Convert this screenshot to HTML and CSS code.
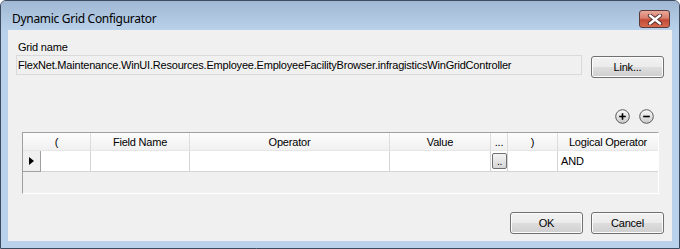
FILE: index.html
```html
<!DOCTYPE html>
<html>
<head>
<meta charset="utf-8">
<link rel="stylesheet" href="styles.css">
</head>
<body>
<div class="window">
  <div class="titlebar">
    <span class="title">Dynamic Grid Configurator</span>
    <div class="close">
      <svg width="16" height="11" viewBox="0 0 16 11">
        <path d="M3 1.5 L13 9.5 M13 1.5 L3 9.5" stroke="#4a2a2a" stroke-width="4.2" stroke-linecap="round"/>
        <path d="M3 1.5 L13 9.5 M13 1.5 L3 9.5" stroke="#ffffff" stroke-width="2.4" stroke-linecap="round"/>
      </svg>
    </div>
  </div>
  <div class="client">
    <div class="label">Grid name</div>
    <div class="name-row">
      <div class="textbox">FlexNet.Maintenance.WinUI.Resources.Employee.EmployeeFacilityBrowser.infragisticsWinGridController</div>
      <div class="btn link-btn">Link...</div>
    </div>
    <div class="icon-row">
      <svg class="round-icon" width="15" height="15" viewBox="0 0 15 15">
        <defs><linearGradient id="g1" x1="0" y1="0" x2="0" y2="1"><stop offset="0" stop-color="#fbfbfb"/><stop offset="1" stop-color="#c9c9c9"/></linearGradient></defs>
        <circle cx="7.5" cy="7.5" r="6.8" fill="url(#g1)" stroke="#5a5a5a" stroke-width="1"/>
        <path d="M4.2 7.5 H10.8 M7.5 4.2 V10.8" stroke="#000" stroke-width="1.6"/>
      </svg>
      <svg class="round-icon" width="15" height="15" viewBox="0 0 15 15">
        <defs><linearGradient id="g2" x1="0" y1="0" x2="0" y2="1"><stop offset="0" stop-color="#fbfbfb"/><stop offset="1" stop-color="#c9c9c9"/></linearGradient></defs>
        <circle cx="7.5" cy="7.5" r="6.8" fill="url(#g2)" stroke="#5a5a5a" stroke-width="1"/>
        <path d="M4.2 7.5 H10.8" stroke="#000" stroke-width="1.6"/>
      </svg>
    </div>
    <div class="grid">
      <div class="hcell span2">(</div>
      <div class="hcell">Field Name</div>
      <div class="hcell">Operator</div>
      <div class="hcell">Value</div>
      <div class="hcell">...</div>
      <div class="hcell">)</div>
      <div class="hcell last">Logical Operator</div>

      <div class="selector"><span class="arrow"></span></div>
      <div class="dcell"></div>
      <div class="dcell"></div>
      <div class="dcell"></div>
      <div class="dcell"></div>
      <div class="dcell center"><div class="mini-btn">..</div></div>
      <div class="dcell"></div>
      <div class="dcell last">AND</div>

      <div class="empty"></div>
    </div>
    <div class="button-row">
      <div class="btn">OK</div>
      <div class="btn">Cancel</div>
    </div>
  </div>
</div>
</body>
</html>
```

FILE: styles.css
```css
html, body {
  margin: 0;
  padding: 0;
  background: #ffffff;
}

.window {
  box-sizing: border-box;
  width: 680px;
  height: 249px;
  border: 1px solid #3c4c5e;
  border-radius: 6px 6px 0 0;
  background: #b9d1ea;
  display: flex;
  flex-direction: column;
  font-family: "Liberation Sans", Arial, sans-serif;
  font-size: 11px;
  letter-spacing: -0.2px;
  color: #000;
}

.titlebar {
  height: 29px;
  flex: none;
  display: flex;
  align-items: flex-start;
  padding-left: 11px;
  padding-right: 9px;
  background: linear-gradient(#a0b8d3, #b9d1ea);
  border-radius: 5px 5px 0 0;
}

.title {
  font-family: "Noto Sans", "Open Sans", sans-serif;
  font-size: 12px;
  line-height: 16px;
  margin-top: 10px;
  color: #000;
  letter-spacing: -0.3px;
}

.close {
  margin-left: auto;
  margin-top: 9px;
  box-sizing: border-box;
  width: 31px;
  height: 18px;
  border: 1px solid #5b3a3a;
  border-radius: 3px;
  background: linear-gradient(#e9a99b 0%, #d87d6c 45%, #c24a36 55%, #d56a50 100%);
  display: flex;
  align-items: center;
  justify-content: center;
}

.client {
  margin: 0 7px 7px 7px;
  flex: 1;
  background: #f0f0f0;
  display: flex;
  flex-direction: column;
  padding: 0 8px;
}

.label {
  margin-top: 10px;
  padding-left: 2px;
  line-height: 14px;
  height: 14px;
}

.name-row {
  display: flex;
  align-items: flex-start;
  margin-top: 1px;
}

.textbox {
  box-sizing: border-box;
  width: 566px;
  height: 20px;
  border: 1px solid #d9d9d9;
  background: #f0f0f0;
  padding: 0 1px;
  line-height: 18px;
  white-space: nowrap;
  overflow: hidden;
}

.btn {
  box-sizing: border-box;
  width: 73px;
  height: 22px;
  border: 1px solid #707070;
  border-radius: 3px;
  background: linear-gradient(#f2f2f2 0%, #ebebeb 50%, #dddddd 51%, #cfcfcf 100%);
  box-shadow: inset 0 0 0 1px #fcfcfc;
  display: flex;
  align-items: center;
  justify-content: center;
}

.link-btn {
  margin-left: auto;
  margin-top: 1px;
}

.icon-row {
  display: flex;
  justify-content: flex-end;
  gap: 9px;
  padding-right: 10px;
  margin-top: 31px;
}

.round-icon {
  display: block;
}

.grid {
  margin: 8px 5px 0 6px;
  display: grid;
  grid-template-columns: 18px 50px 99px 200px 101px 17px 50px 100px;
  grid-template-rows: 18px 21px 21px;
  border-top: 1px solid #a0a0a0;
  border-left: 1px solid #a0a0a0;
  border-bottom: 1px solid #ffffff;
  border-right: 1px solid #ffffff;
  background: #f0f0f0;
}

.hcell {
  background: linear-gradient(#fdfdfd, #f0f0f0);
  border-right: 1px solid #dcdcdc;
  border-bottom: 1px solid #e6e6e6;
  text-align: center;
  line-height: 18px;
  box-sizing: border-box;
  white-space: nowrap;
}

.span2 {
  grid-column: span 2;
}

.hcell.last, .dcell.last {
  border-right: none;
}

.selector {
  box-sizing: border-box;
  background: #f0f0f0;
  border-right: 1px solid #a0a0a0;
  border-bottom: 1px solid #a0a0a0;
  display: flex;
  align-items: center;
  padding-left: 6px;
}

.arrow {
  width: 0;
  height: 0;
  border-top: 4.5px solid transparent;
  border-bottom: 4.5px solid transparent;
  border-left: 5px solid #000;
}

.dcell {
  box-sizing: border-box;
  background: #ffffff;
  border-right: 1px solid #d4d4d4;
  border-bottom: 1px solid #d4d4d4;
  line-height: 20px;
  padding-left: 3px;
  white-space: nowrap;
}

.dcell.center {
  padding-left: 1px;
  display: flex;
  align-items: center;
}

.mini-btn {
  box-sizing: border-box;
  width: 15px;
  height: 16px;
  border: 1px solid #707070;
  border-radius: 2px;
  background: linear-gradient(#f4f4f4, #d6d6d6);
  font-size: 10px;
  line-height: 16px;
  text-align: center;
}

.empty {
  grid-column: 1 / -1;
  background: #f0f0f0;
}

.button-row {
  display: flex;
  justify-content: flex-end;
  gap: 8px;
  margin-top: 18px;
}
```
